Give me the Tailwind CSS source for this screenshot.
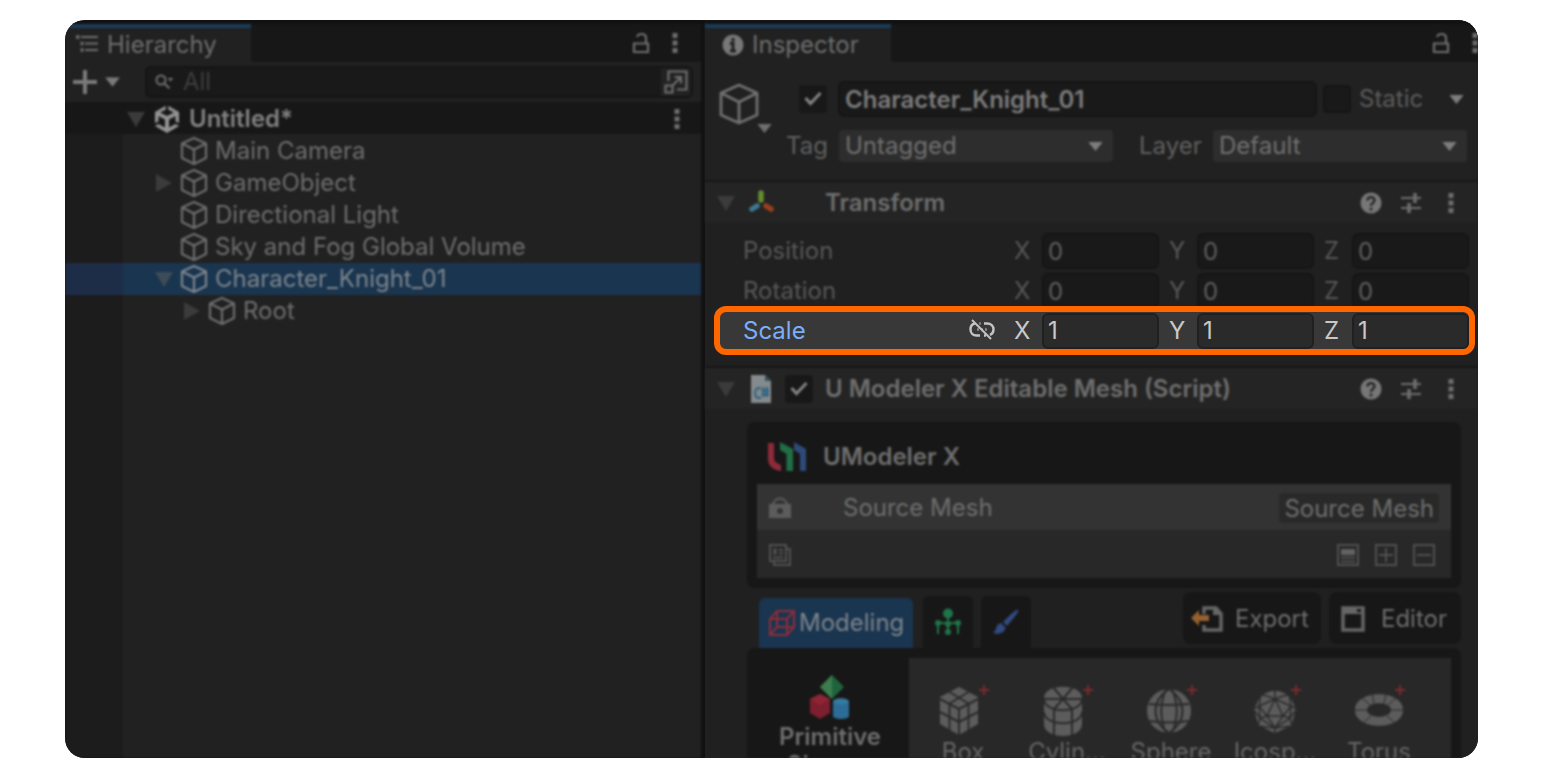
<!DOCTYPE html>
<html lang="en">
<head>
<meta charset="utf-8">
<title>Untitled – Hierarchy and Inspector</title>
<script src="https://cdn.jsdelivr.net/npm/@tailwindcss/browser@4"></script>
</head>
<body class="bg-white">
<svg class="hidden" aria-hidden="true">
  <symbol id="cube" viewBox="0 0 28 30"><path d="M14 2 26 7.500V22L14 28 2 22V7.500ZM2 7.500 14 13.500 26 7.500M14 13.500V28" fill="none" stroke="currentColor" stroke-width="2.200" stroke-linejoin="round"/></symbol>
  <symbol id="down" viewBox="0 0 18 18"><path d="M0 2H18L9 17Z" fill="currentColor"/></symbol>
  <symbol id="right" viewBox="0 0 18 18"><path d="M1 0 17 9 1 18Z" fill="currentColor"/></symbol>
  <symbol id="caret" viewBox="0 0 16 10"><path d="M0 0H16L8 10Z" fill="currentColor"/></symbol>
  <symbol id="dots" viewBox="0 0 6 22"><path d="M.5 1h5v5h-5zM.5 8.500h5v5h-5zM.5 16h5v5h-5z" fill="currentColor"/></symbol>
  <symbol id="lock" viewBox="0 0 18 22"><path d="M2 11.500H16V20H2ZM14 11V6C14 3 12 2 9.500 2S5.500 3 5 5" fill="none" stroke="currentColor" stroke-width="2.200"/></symbol>
  <symbol id="help" viewBox="0 0 22 22"><circle cx="11" cy="11" r="10.500" fill="currentColor"/><path d="M7.500 8.500C7.500 4 14.500 4 14.500 8.300 14.500 11 11 10.800 11 14" fill="none" stroke="#242424" stroke-width="2.400"/><circle cx="11" cy="17" r="1.500" fill="#242424"/></symbol>
  <symbol id="preset" viewBox="0 0 22 22"><path d="M1 6H21M1 16H21" stroke="currentColor" stroke-width="2"/><path d="M15 1V11M9 11V21" stroke="currentColor" stroke-width="3.500"/></symbol>
  <symbol id="check" viewBox="0 0 28 28"><path d="M6.500 13 11.500 18.500 21.500 8" fill="none" stroke="currentColor" stroke-width="3"/></symbol>
  <symbol id="spark" viewBox="0 0 10 10"><path d="M5 0V10M0 5H10" stroke="#7d2a2a" stroke-width="2"/></symbol>
</svg>

<main class="flex h-screen px-[65px] py-5 font-['Inter',sans-serif] text-2xl leading-8 text-[#6e6e6e]">
<div class="flex min-w-0 flex-1 gap-1 overflow-hidden rounded-[20px] bg-[#111111]">

  <!-- Hierarchy -->
  <section class="flex w-[636px] shrink-0 flex-col bg-[#212121] blur-[1px]">
    <header class="flex h-[42px] shrink-0 bg-[#171717] border-t-4 border-[#111111]">
      <h2 class="flex w-[186px] items-center gap-2 border-t-4 border-[#1b3c58] bg-[#212121] pl-2.5">
        <svg class="size-6" viewBox="0 0 24 24" fill="none" stroke="currentColor" stroke-width="2"><path d="M6 4H23M10 10.500H23M10 17H23"/><path d="M1 4H4.500M5.500 10.500H8.500M5.500 17H8.500" stroke-width="3.500"/></svg>
        Hierarchy</h2>
      <div class="ml-auto flex items-center gap-[22px] pr-[23px]">
        <button aria-label="Lock"><svg class="h-[22px] w-[18px]"><use href="#lock"/></svg></button>
        <button aria-label="Hierarchy menu"><svg class="h-[22px] w-[6px]"><use href="#dots"/></svg></button>
      </div>
    </header>
    <div class="flex h-10 shrink-0 items-center pl-2 pr-2">
      <button aria-label="Create" class="flex items-center gap-2 text-[#7a7a7a]">
        <svg class="size-6" viewBox="0 0 24 24" stroke="currentColor" stroke-width="4"><path d="M12 0V24M0 12H24"/></svg>
        <svg class="h-2.5 w-[15px]" viewBox="0 0 16 10"><use href="#caret"/></svg>
      </button>
      <div class="ml-[25px] flex h-8 flex-1 items-center overflow-hidden rounded-md border-2 border-[#141414] bg-[#191919]">
        <svg class="ml-2 h-4 w-5 text-[#6e6e6e]" viewBox="0 0 20 16" fill="none" stroke="currentColor" stroke-width="2"><circle cx="6" cy="6" r="4.500"/><path d="m9.500 9.500 5 5"/><path d="M12.500 4h6l-3 3.500Z" fill="currentColor" stroke="none"/></svg>
        <input aria-label="Search hierarchy" placeholder="All" class="ml-2 w-0 flex-1 bg-transparent placeholder:text-[#3e3e3e]">
        <button aria-label="Open search window" class="grid h-full w-[30px] place-items-center bg-[#222]">
          <svg class="size-6" viewBox="0 0 24 24" fill="none" stroke="currentColor" stroke-width="2.200"><path d="M4.500 11V1.500H22.500V19.500H13M1.500 15.500H8.500V22.500H1.500ZM9 15 17 7M10.500 7H17V13.500"/></svg>
        </button>
      </div>
    </div>
    <div class="flex h-8 shrink-0 items-center bg-[#171717] pl-[62px] pr-[21px] pt-px font-semibold text-[#828282]">
      <svg class="size-[18px] text-[#3b3b3b]"><use href="#down"/></svg>
      <svg class="ml-[9px] h-7 w-[26px]" viewBox="0 0 26 28"><path d="M13 0 25 7V21L13 28 1 21V7Z" fill="#929292"/><path d="M13 11 6 7.500 13 4 20 7.500ZM4.500 11 11 14.500V22.500L4.500 19ZM21.500 11 15 14.500V22.500L21.500 19Z" fill="#171717"/><path d="M13 0V5M0 20 5 17.500M26 20 21 17.500" stroke="#171717" stroke-width="2.500"/></svg>
      <span class="ml-[9px]">Untitled*</span>
      <button aria-label="Scene menu" class="ml-auto text-[#6e6e6e]"><svg class="h-[22px] w-[6px]"><use href="#dots"/></svg></button>
    </div>
    <ul class="flex-1 bg-linear-to-r from-[#1c1c1c] from-[58px] to-[#212121] to-[58px] pt-px">
      <li class="flex h-8 items-center gap-[7px] pl-[115px]"><svg class="h-[30px] w-7"><use href="#cube"/></svg>Main Camera</li>
      <li class="flex h-8 items-center gap-[7px] pl-[90px]"><svg class="size-[18px] text-[#3b3b3b]"><use href="#right"/></svg><svg class="h-[30px] w-7"><use href="#cube"/></svg>GameObject</li>
      <li class="flex h-8 items-center gap-[7px] pl-[115px]"><svg class="h-[30px] w-7"><use href="#cube"/></svg>Directional Light</li>
      <li class="flex h-8 items-center gap-[7px] pl-[115px]"><svg class="h-[30px] w-7"><use href="#cube"/></svg>Sky and Fog Global Volume</li>
      <li class="flex h-8 items-center gap-[7px] bg-linear-to-r from-[#1d2d47] from-[58px] to-[#1a354f] to-[58px] pl-[90px] text-[#7d858c]"><svg class="size-[18px] text-[#3d4c58]"><use href="#down"/></svg><svg class="h-[30px] w-7"><use href="#cube"/></svg>Character_Knight_01</li>
      <li class="flex h-8 items-center gap-[7px] pl-[118px]"><svg class="size-[18px] text-[#3b3b3b]"><use href="#right"/></svg><svg class="h-[30px] w-7"><use href="#cube"/></svg>Root</li>
    </ul>
  </section>

  <!-- Inspector -->
  <section class="flex min-w-0 flex-1 flex-col bg-[#202020]">
    <div class="shrink-0 blur-[1px]">
      <header class="flex h-[42px] border-t-4 border-[#111111] bg-[#171717]">
        <h2 class="flex w-[186px] items-center gap-2 border-t-4 border-[#1b3c58] bg-[#212121] pl-[17px]">
          <svg class="size-[22px] text-[#787878]" viewBox="0 0 22 22"><circle cx="11" cy="11" r="10.500" fill="currentColor"/><path d="M11 4V7.500M8 9.500H11V17M8 17H14" stroke="#212121" stroke-width="3" fill="none"/></svg>
          Inspector</h2>
        <div class="ml-auto flex items-center gap-[22px]">
          <button aria-label="Lock"><svg class="h-[22px] w-[18px]"><use href="#lock"/></svg></button>
          <button aria-label="Inspector menu"><svg class="h-[22px] w-[6px]"><use href="#dots"/></svg></button>
        </div>
      </header>
      <div class="flex h-[118px] bg-[#212121] pl-[13px] pr-[11px] pt-[19px]">
        <button aria-label="Object icon" class="relative h-[54px] w-[54px] shrink-0">
          <svg class="absolute left-0 top-0.5 h-[42px] w-11" viewBox="0 0 44 42"><path d="M21 2 39 10V32L21 40 3 32V10ZM3 10 21 19 39 10M21 19V40" fill="none" stroke="#707070" stroke-width="2.800" stroke-linejoin="round"/></svg>
          <svg class="absolute bottom-0.5 right-0 h-[9px] w-[15px]" viewBox="0 0 16 10"><use href="#caret"/></svg>
        </button>
        <div class="flex min-w-0 flex-1 flex-col gap-[13px]">
          <div class="flex h-9 items-center pl-[27px]">
            <span class="relative size-7"><input type="checkbox" checked aria-label="Active" class="size-7 appearance-none rounded bg-[#181818]"><svg class="pointer-events-none absolute inset-0 size-7 text-[#858585]"><use href="#check"/></svg></span>
            <input aria-label="Object name" value="Character_Knight_01" class="ml-[11px] h-9 w-0 flex-1 rounded-md border-2 border-[#151515] bg-[#191919] px-[5px] font-semibold text-[#7c7c7c]">
            <input id="static" type="checkbox" class="ml-1.5 size-7 appearance-none rounded border-2 border-[#151515] bg-[#191919]">
            <label for="static" class="ml-2 w-[90px] text-[#5c5c5c]">Static</label>
            <button aria-label="Static options"><svg class="mr-[3px] h-[9px] w-[15px] text-[#7d7d7d]" viewBox="0 0 16 10"><use href="#caret"/></svg></button>
          </div>
          <div class="flex h-8 items-center text-[#606060]">
            <label for="tag" class="w-[67px] pl-[14px]">Tag</label>
            <span class="relative w-[274px]"><select id="tag" class="h-8 w-full appearance-none rounded bg-[#2d2d2d] pl-1.5 text-[#707070]"><option>Untagged</option></select><svg class="pointer-events-none absolute right-2.5 top-3 h-[9px] w-[15px] text-[#7d7d7d]" viewBox="0 0 16 10"><use href="#caret"/></svg></span>
            <label for="layer" class="w-[100px] pl-[26px]">Layer</label>
            <span class="relative flex-1"><select id="layer" class="h-8 w-full appearance-none rounded bg-[#2d2d2d] pl-1.5 text-[#707070]"><option>Default</option></select><svg class="pointer-events-none absolute right-2.5 top-3 h-[9px] w-[15px] text-[#7d7d7d]" viewBox="0 0 16 10"><use href="#caret"/></svg></span>
          </div>
        </div>
      </div>
      <div class="flex h-[43px] items-center border-t-2 border-[#171717] bg-[#242424] pl-3 pr-4">
        <svg class="size-[18px] text-[#3b3b3b]"><use href="#down"/></svg>
        <svg class="ml-3 size-7" viewBox="0 0 28 28" stroke-width="5.500" stroke-linecap="round"><path d="M14 4V11" stroke="#648d2c"/><path d="M10 17 5 20" stroke="#3d7690"/><path d="M19 17 24 20" stroke="#99401f"/></svg>
        <h3 class="ml-[50px] flex-1 font-semibold">Transform</h3>
        <div class="flex items-center gap-[18px]">
          <button aria-label="Transform help" class="text-[#777]"><svg class="size-[22px]"><use href="#help"/></svg></button>
          <button aria-label="Transform presets"><svg class="size-[22px]"><use href="#preset"/></svg></button>
          <button aria-label="Transform menu" class="px-2"><svg class="h-[22px] w-[6px]"><use href="#dots"/></svg></button>
        </div>
      </div>
      <div class="flex flex-col gap-1 pl-[38px] pr-[9px] pt-[10px] text-[#585858]">
        <div class="flex h-9 items-center">
          <span class="flex-1">Position</span>
          <label for="px" class="w-7">X</label><input id="px" value="0" class="mr-2.5 h-9 w-[117px] rounded-md border-2 border-[#151515] bg-[#191919] px-1 text-[#606060]">
          <label for="py" class="w-7">Y</label><input id="py" value="0" class="mr-2.5 h-9 w-[117px] rounded-md border-2 border-[#151515] bg-[#191919] px-1 text-[#606060]">
          <label for="pz" class="w-7">Z</label><input id="pz" value="0" class="h-9 w-[117px] rounded-md border-2 border-[#151515] bg-[#191919] px-1 text-[#606060]">
        </div>
        <div class="flex h-9 items-center">
          <span class="flex-1">Rotation</span>
          <label for="rx" class="w-7">X</label><input id="rx" value="0" class="mr-2.5 h-9 w-[117px] rounded-md border-2 border-[#151515] bg-[#191919] px-1 text-[#606060]">
          <label for="ry" class="w-7">Y</label><input id="ry" value="0" class="mr-2.5 h-9 w-[117px] rounded-md border-2 border-[#151515] bg-[#191919] px-1 text-[#606060]">
          <label for="rz" class="w-7">Z</label><input id="rz" value="0" class="h-9 w-[117px] rounded-md border-2 border-[#151515] bg-[#191919] px-1 text-[#606060]">
        </div>
      </div>
    </div>

    <!-- Highlighted row -->
    <div class="relative z-10 -mt-[3px] ml-[9px] mr-[3px] flex h-[49px] shrink-0 items-center rounded-xl border-6 border-[#ff6600] bg-[#383838] pl-[23px] text-[#c8c8c8]">
      <span class="flex-1 text-[#7baefa]">Scale</span>
      <button aria-label="Link scale axes" class="mr-[19px]"><svg class="h-6 w-[26px]" viewBox="0 0 26 24" fill="none" stroke="#c4c4c4" stroke-width="2.400"><path d="M6 4.500C3 5 1.500 7.500 1.500 10.500 1.500 14 4 16.500 7.500 16.500H11M10.500 4.500H11.500M15 4.500H18C22 4.500 24.500 7 24.500 10.500 24.500 13 23 15 21 16M15 16.500H17"/><path d="M8 10.500H10M12 10.500H14M16 10.500H18" stroke="#8a8a8a"/><path d="M3 1 22 20" stroke-width="2"/></svg></button>
      <label for="sx" class="w-7">X</label><input id="sx" value="1" class="mr-2.5 h-9 w-[117px] rounded-md border-2 border-[#202020] bg-[#2a2a2a] px-1">
      <label for="sy" class="w-7">Y</label><input id="sy" value="1" class="mr-2.5 h-9 w-[117px] rounded-md border-2 border-[#202020] bg-[#2a2a2a] px-1">
      <label for="sz" class="w-7">Z</label><input id="sz" value="1" class="h-9 w-[117px] rounded-md border-2 border-[#202020] bg-[#2a2a2a] px-1">
    </div>

    <div class="mt-[11px] flex min-h-0 flex-1 flex-col blur-[1px]">
      <div class="flex h-[43px] shrink-0 items-center border-t-2 border-[#171717] bg-[#242424] pl-3 pr-4">
        <svg class="size-[18px] text-[#3b3b3b]"><use href="#down"/></svg>
        <svg class="ml-[15px] h-[30px] w-[22px]" viewBox="0 0 22 30"><path d="M1 1H15L21 7V29H1Z" fill="#858a8c"/><path d="M15 1 21 7H15Z" fill="#35505c"/><path d="M11 14.500C3 11 3 27 11 23.500M13.500 13V23M17 13V23M11.500 16.500H19M11.500 20.500H19" fill="none" stroke="#2c6280" stroke-width="2"/></svg>
        <span class="relative ml-[13px] size-7"><input id="mesh" type="checkbox" checked class="size-7 appearance-none rounded bg-[#181818]"><svg class="pointer-events-none absolute inset-0 size-7 text-[#858585]"><use href="#check"/></svg></span>
        <label for="mesh" class="ml-3 flex-1 font-semibold">U Modeler X Editable Mesh (Script)</label>
        <div class="flex items-center gap-[18px]">
          <button aria-label="Script help" class="text-[#777]"><svg class="size-[22px]"><use href="#help"/></svg></button>
          <button aria-label="Script presets"><svg class="size-[22px]"><use href="#preset"/></svg></button>
          <button aria-label="Script menu" class="px-2"><svg class="h-[22px] w-[6px]"><use href="#dots"/></svg></button>
        </div>
      </div>

      <div class="ml-[42px] mr-[17px] mt-[13px] shrink-0 rounded-lg bg-[#171717] px-2.5 pb-2.5">
        <div class="flex h-[62px] items-center gap-4 pl-2.5 pt-2 font-semibold">
          <svg class="h-[30px] w-10" viewBox="0 0 40 30"><path d="M1 1H7V16C7 20 10 21 14 23V29C6 28 1 24 1 17Z" fill="#8e2a39"/><path d="M13 0 26 7V29H19.500V12L13 8Z" fill="#206e46"/><path d="M27 0 39 7V29H33V12L27 8Z" fill="#2e4a78"/></svg>
          UModeler X</div>
        <div class="flex h-[46px] items-center bg-[#333333] px-3 pt-0.5">
          <svg class="h-6 w-[22px]" viewBox="0 0 22 24"><path d="M4 10C4 0 18 0 18 10" fill="none" stroke="#5c5c5c" stroke-width="2"/><path d="M0 8H22V22H0Z" fill="#5c5c5c"/><circle cx="11" cy="15" r="3" fill="#333"/></svg>
          <span class="ml-[52px] flex-1">Source Mesh</span>
          <button class="h-[30px] rounded bg-[#292929] px-[5px] leading-8">Source Mesh</button>
        </div>
        <div class="flex h-12 items-center gap-4 bg-[#282828] pl-3 pr-4 pt-0.5 text-[#505050]">
          <button aria-label="Duplicate" class="mr-auto"><svg class="size-[22px]" viewBox="0 0 22 22" fill="none" stroke="currentColor" stroke-width="2"><path d="M1 1H17V17H1ZM5 17V21H21V5H17M4 13.500H14M10 6H14M10 9.500H14"/><path d="M6 4.500V10.500" stroke-width="3.500"/></svg></button>
          <button aria-label="List"><svg class="size-[22px]" viewBox="0 0 22 22" fill="none" stroke="currentColor" stroke-width="2"><path d="M1 1H21V21H1ZM4 13.500H18M4 17.500H18"/><path d="M4 8H18" stroke-width="6" stroke="#626262"/></svg></button>
          <button aria-label="Add"><svg class="size-[22px]" viewBox="0 0 22 22" fill="none" stroke="currentColor" stroke-width="2"><path d="M1 1H21V21H1ZM11 4V18M4 11H18"/></svg></button>
          <button aria-label="Remove"><svg class="size-[22px]" viewBox="0 0 22 22" fill="none" stroke="currentColor" stroke-width="2"><path d="M1 1H21V21H1ZM4 11H18"/></svg></button>
        </div>
      </div>

      <div class="ml-[54px] mr-[17px] mt-1 flex h-14 shrink-0 items-end gap-2">
        <button class="mr-0.5 flex h-[50px] w-[154px] items-center gap-1 rounded-t-md bg-[#1a354f] pl-2.5 text-[#7d858c]">
          <svg class="size-[26px] shrink-0" viewBox="0 0 26 26" fill="none" stroke="#8d2c3a" stroke-width="2"><path d="M1 9 8 1H25V17L18 25H1ZM1 9H18V25M18 9 25 1M8 1V17H25M8 17 1 25"/></svg>
          Modeling</button>
        <button aria-label="Rigging" class="grid h-[52px] w-[50px] place-items-center rounded-t-md bg-[#171717]">
          <svg class="size-7" viewBox="0 0 28 28" fill="#20744a" stroke="#20744a" stroke-width="2"><circle cx="14" cy="5.500" r="4"/><path d="M14 6V24M3 15H25M4 15V26M24 15V26"/><circle cx="4" cy="15" r="2"/><circle cx="24" cy="15" r="2"/><circle cx="14" cy="16" r="2"/><circle cx="14" cy="24" r="2"/></svg></button>
        <button aria-label="Painting" class="grid h-[52px] w-[50px] place-items-center rounded-t-md bg-[#171717]">
          <svg class="size-[26px]" viewBox="0 0 26 26" fill="#324a80"><path d="M25 1C26 2 25 4 14 17L10 13C20 3 24 0 25 1Z"/><path d="M8 14 12.500 18.500C12 24 5 26 0 24 4 22 2 15 8 14Z"/></svg></button>
        <button class="mb-1 ml-auto flex h-[52px] w-[138px] items-center gap-3 rounded-lg bg-[#171717] pl-2 pt-0.5">
          <svg class="h-[26px] w-8" viewBox="0 0 32 26"><path d="M13 8V2H25L30 8V24H13V19" fill="none" stroke="#666" stroke-width="3.500"/><path d="M22 1V9H31Z" fill="#666"/><path d="M0 12 8 4V9H18V15H8V20Z" fill="#96602f"/></svg>
          Export</button>
        <button class="mb-1 flex h-[52px] w-[132px] items-center gap-4 rounded-lg bg-[#171717] pl-3 pt-0.5">
          <svg class="h-[26px] w-6" viewBox="0 0 24 26"><path d="M2 2H22V24H2Z" fill="none" stroke="#666" stroke-width="3.500"/><path d="M2 2H22V8H2Z" fill="#666"/><path d="M16 3H20V6H16Z" fill="#171717"/></svg>
          Editor</button>
      </div>

      <div class="ml-[42px] mr-[17px] flex min-h-0 flex-1 overflow-hidden rounded-t-lg bg-[#171717] px-2.5 pt-2.5">
        <button class="mr-1.5 flex w-[146px] shrink-0 flex-col items-center justify-start pt-[17px] text-center font-semibold leading-7">
          <svg class="h-11 w-10 shrink-0" viewBox="0 0 40 44"><path d="M22 0 34 12 22 24 10 12Z" fill="#1f633c"/><path d="M22 0V24L10 12Z" fill="#3b7d4c"/><path d="M10 19 20 24V38L10 44 0 38V24Z" fill="#7d1f2f"/><path d="M10 19 20 24 10 30 0 24Z" fill="#8e2535"/><path d="M23 27C23 22 39 22 39 27V41C39 45 23 45 23 41Z" fill="#2c6c96"/><ellipse cx="31" cy="26.500" rx="8" ry="3" fill="#367a9f"/></svg>
          <span class="mt-1 w-min">Primitive Shapes</span>
        </button>
        <ul class="grid min-w-0 flex-1 auto-rows-min grid-cols-5 bg-[#282828] pl-0.5 pr-5 pt-6 text-[#666666]">
          <li class="flex flex-col items-center">
            <svg class="h-[54px] w-16" viewBox="0 0 64 54"><path d="M28 5 47 15V42L28 53 9 42V15Z" fill="#5c5c5c"/><path d="M9 17 28 27 47 17M28 27V53M18.500 10 37.500 21.500V48M37.500 10 18.500 21.500V48M9 30 28 40 47 30" fill="none" stroke="#2a2a2a" stroke-width="2"/><use href="#spark" x="48" y="3" width="10" height="10"/></svg>Box</li>
          <li class="flex flex-col items-center">
            <svg class="h-[54px] w-16" viewBox="0 0 64 54"><path d="M9 16C9 1 47 1 47 16V42C47 58 9 58 9 42Z" fill="#5c5c5c"/><path d="M9 17C9 32 47 32 47 17M9 30C9 45 47 45 47 30M28 17 18 5M28 17 38 5M28 17H9M28 17H47M28 17 19 27V53M28 17 37 27V53" fill="none" stroke="#2a2a2a" stroke-width="2"/><use href="#spark" x="48" y="3" width="10" height="10"/></svg>Cylin...</li>
          <li class="flex flex-col items-center">
            <svg class="h-[54px] w-16" viewBox="0 0 64 54"><circle cx="30" cy="29" r="22" fill="#5c5c5c"/><path d="M30 7C12 19 12 39 30 51M30 7C48 19 48 39 30 51M27 7C21 21 21 37 27 51M33 7C39 21 39 37 33 51M10 22Q30 24 50 22M10 39Q30 42 50 39" fill="none" stroke="#2a2a2a" stroke-width="2"/><use href="#spark" x="48" y="3" width="10" height="10"/></svg>Sphere</li>
          <li class="flex flex-col items-center">
            <svg class="h-[54px] w-16" viewBox="0 0 64 54"><path d="M32 7 46 12 54 27 49 44 32 52 15 44 10 27 18 12Z" fill="#5c5c5c"/><path d="M32 7 18 12 10 27 15 44 32 52 49 44 54 27 46 12ZM32 7V17L18 12 16 24 10 27 17 36 15 44 32 46V52M32 17 46 12 48 24 54 27 47 36 49 44 32 46M32 17 16 24 17 36 32 46 47 36 48 24ZM32 17 24 34 32 46 40 34ZM16 24 24 34 17 36M48 24 40 34 47 36M24 34H40" fill="none" stroke="#2a2a2a" stroke-width="1.500"/><use href="#spark" x="48" y="3" width="10" height="10"/></svg>Icosp...</li>
          <li class="flex flex-col items-center">
            <svg class="h-[54px] w-16" viewBox="0 0 64 54"><path fill-rule="evenodd" d="M8 28C8 7 56 7 56 28S8 49 8 28ZM20 28C20 37 44 37 44 28S20 19 20 28Z" fill="#5c5c5c"/><path d="M25 11 27 22M39 11 37 22M15 16 23 23M49 16 41 23M8 28H20M44 28H56M16 41 24 34M40 34 48 41" stroke="#2a2a2a" stroke-width="1"/><use href="#spark" x="48" y="3" width="10" height="10"/></svg>Torus</li>
        </ul>
      </div>
    </div>
  </section>
</div>
</main>
</body>
</html>
